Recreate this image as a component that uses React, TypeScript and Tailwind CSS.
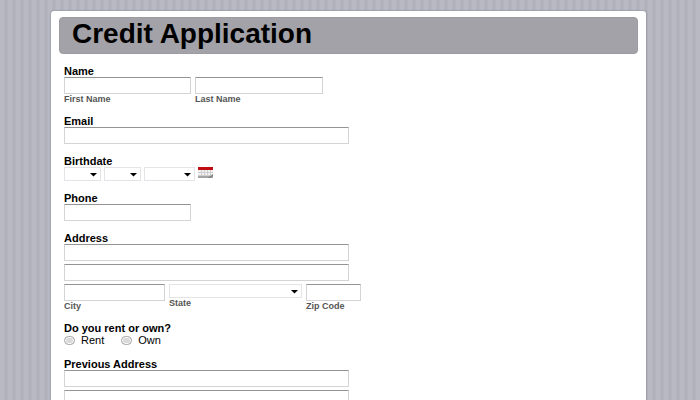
import type { ReactNode } from "react";

const inputClass =
  "block h-[17px] border border-[#d4d4d4] border-t-[#949494] bg-white px-1 text-[11px] outline-none";

const Label = ({ htmlFor, children }: { htmlFor: string; children: ReactNode }) => (
  <label htmlFor={htmlFor} className="block text-[11px] leading-3 font-bold text-black">
    {children}
  </label>
);

const SubLabel = ({ htmlFor, children }: { htmlFor: string; children: ReactNode }) => (
  <label htmlFor={htmlFor} className="block text-[9px] leading-[10px] font-bold text-[#555555]">
    {children}
  </label>
);

const SelectBox = ({ id, label, className }: { id: string; label?: string; className: string }) => (
  <div className={`relative ${className}`}>
    <select
      id={id}
      aria-label={label}
      className="block h-[14px] w-full appearance-none border border-[#e3e3e8] bg-white text-[9px] outline-none"
    >
      <option value=""></option>
    </select>
    <svg viewBox="0 0 7 4" className="pointer-events-none absolute top-[6px] right-1 h-1 w-[7px]">
      <path d="M0 0h7L3.5 3.5z" fill="#000" />
    </svg>
  </div>
);

const CalendarIcon = () => (
  <svg viewBox="0 0 15 12" className="h-3 w-[15px]">
    <rect width="15" height="11" fill="#f1f1f1" />
    <path d="M0 5.5h15M0 8.5h15M3.5 3v7M6.5 3v7M9.5 3v7M12.5 3v7" stroke="#cfcfcf" />
    <rect width="15" height="3" fill="#c00d12" />
    <path d="M0 9h15v2H0z" fill="#a4a4a4" />
    <path d="M10 11l5-4v2l-3 2z" fill="#7d7d7d" />
  </svg>
);

const Radio = ({ id, label }: { id: string; label: string }) => (
  <div className="flex items-center gap-[6px]">
    <input
      id={id}
      type="radio"
      name="housing"
      value={label}
      className="h-[9px] w-[11px] appearance-none rounded-full border border-[#a9a9a9] bg-[#dadada] shadow-[inset_0_0_0_1px_#f8f8f8] checked:bg-[#333333]"
    />
    <label htmlFor={id} className="text-[11px] leading-[13px] text-black">
      {label}
    </label>
  </div>
);

const App = () => {
  return (
    <div className="min-h-screen bg-[#b6b6c0] bg-[repeating-linear-gradient(90deg,#b9b9c3_0px,#b9b9c3_4px,#b0b0ba_5px,#b0b0ba_7px,#b9b9c3_8px)] pt-[11px] pr-[54px] pl-[51px] font-['Liberation_Sans',Arial,sans-serif]">
      <main className="min-h-screen rounded-t-[3px] bg-white px-2 pt-[6px] shadow-[0_0_2px_#777780]">
        {/* Title */}
        <header className="rounded-[4px] border border-[#9b9ba0] bg-[#a3a2a8] px-3 pb-[3px]">
          <h1 className="text-[28px] leading-8 font-bold text-black">Credit Application</h1>
        </header>

        <form className="flex flex-col gap-[11px] px-[5px] pt-[11px] pb-4">
          {/* Name */}
          <div>
            <Label htmlFor="first">Name</Label>
            <div className="flex gap-1">
              <div className="w-[127px]">
                <input id="first" type="text" className={`${inputClass} w-full`} />
                <SubLabel htmlFor="first">First Name</SubLabel>
              </div>
              <div className="w-[128px]">
                <input id="last" type="text" className={`${inputClass} w-full`} />
                <SubLabel htmlFor="last">Last Name</SubLabel>
              </div>
            </div>
          </div>

          <div>
            <Label htmlFor="email">Email</Label>
            <input id="email" type="email" className={`${inputClass} w-[285px]`} />
          </div>

          {/* Birthdate */}
          <div>
            <Label htmlFor="month">Birthdate</Label>
            <div className="flex gap-[3px]">
              <SelectBox id="month" label="Month" className="w-[37px]" />
              <SelectBox id="day" label="Day" className="w-[37px]" />
              <SelectBox id="year" label="Year" className="w-[51px]" />
              <button type="button" aria-label="Pick a date" className="h-3">
                <CalendarIcon />
              </button>
            </div>
          </div>

          <div>
            <Label htmlFor="phone">Phone</Label>
            <input id="phone" type="tel" className={`${inputClass} w-[127px]`} />
          </div>

          {/* Address */}
          <div>
            <Label htmlFor="street">Address</Label>
            <div className="flex flex-col gap-[3px]">
              <input id="street" type="text" className={`${inputClass} w-[285px]`} />
              <input type="text" aria-label="Address line 2" className={`${inputClass} w-[285px]`} />
              <div className="flex gap-1">
                <div className="w-[101px]">
                  <input id="city" type="text" className={`${inputClass} w-full`} />
                  <SubLabel htmlFor="city">City</SubLabel>
                </div>
                <div className="w-[133px]">
                  <SelectBox id="state" className="w-full" />
                  <SubLabel htmlFor="state">State</SubLabel>
                </div>
                <div className="w-[55px]">
                  <input id="zip" type="text" className={`${inputClass} w-full`} />
                  <SubLabel htmlFor="zip">Zip Code</SubLabel>
                </div>
              </div>
            </div>
          </div>

          {/* Housing */}
          <fieldset>
            <legend className="block text-[11px] leading-3 font-bold text-black">Do you rent or own?</legend>
            <div className="flex gap-[17px]">
              <Radio id="rent" label="Rent" />
              <Radio id="own" label="Own" />
            </div>
          </fieldset>

          {/* Previous address */}
          <div>
            <Label htmlFor="previous">Previous Address</Label>
            <div className="flex flex-col gap-[3px]">
              <input id="previous" type="text" className={`${inputClass} w-[285px]`} />
              <input type="text" aria-label="Previous address line 2" className={`${inputClass} w-[285px]`} />
            </div>
          </div>
        </form>
      </main>
    </div>
  );
};

export default App;
